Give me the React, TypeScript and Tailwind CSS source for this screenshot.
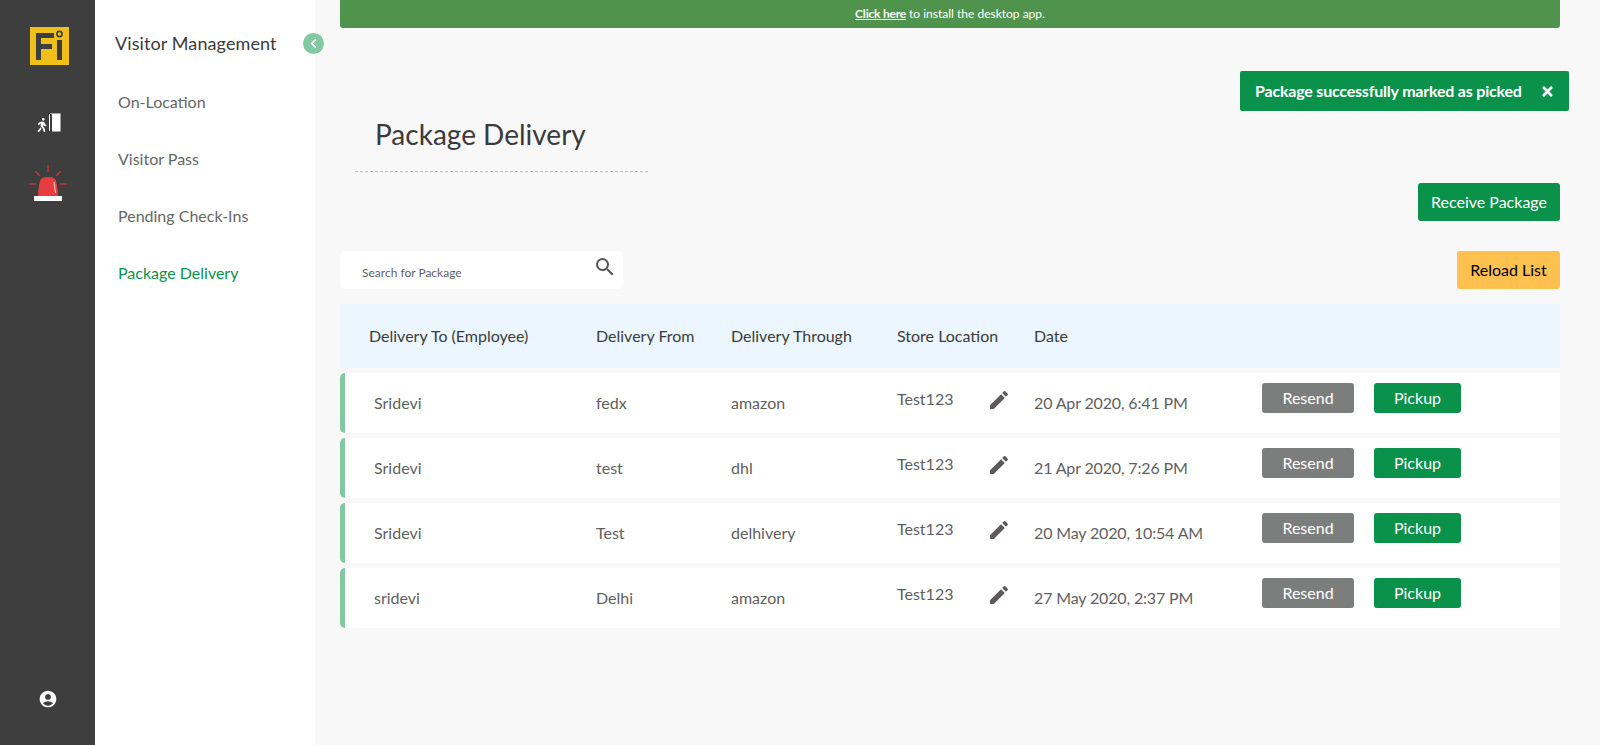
import { FaChevronLeft, FaTimes, FaWalking } from "react-icons/fa";
import { MdAccountCircle, MdEdit, MdSearch } from "react-icons/md";

type Delivery = {
  employee: string;
  from: string;
  through: string;
  location: string;
  date: string;
};

const deliveries: Delivery[] = [
  { employee: "Sridevi", from: "fedx", through: "amazon", location: "Test123", date: "20 Apr 2020, 6:41 PM" },
  { employee: "Sridevi", from: "test", through: "dhl", location: "Test123", date: "21 Apr 2020, 7:26 PM" },
  { employee: "Sridevi", from: "Test", through: "delhivery", location: "Test123", date: "20 May 2020, 10:54 AM" },
  { employee: "sridevi", from: "Delhi", through: "amazon", location: "Test123", date: "27 May 2020, 2:37 PM" },
];

const menuItems = ["On-Location", "Visitor Pass", "Pending Check-Ins", "Package Delivery"];

const Logo = () => (
  <svg width="39" height="38" viewBox="0 0 39 38" className="block">
    <rect width="39" height="38" fill="#f0bf1a" />
    <rect x="6" y="6" width="5" height="27" fill="#3e3e3e" />
    <rect x="6" y="6" width="18" height="5" fill="#3e3e3e" />
    <rect x="6" y="17" width="16" height="5" fill="#3e3e3e" />
    <rect x="27" y="13" width="5" height="20" fill="#3e3e3e" />
    <circle cx="29.5" cy="7" r="2.6" fill="none" stroke="#3e3e3e" strokeWidth="1.6" />
  </svg>
);

const ExitIcon = () => (
  <div className="flex items-end">
    <FaWalking className="text-[14px] text-white" />
    <svg width="12" height="19" viewBox="0 0 12 19" className="block">
      <path d="M0.5 1v17" stroke="#fff" strokeWidth="1" />
      <path d="M0.5 0.5H11.5V18.5H3V1.5z" fill="#fff" />
    </svg>
  </div>
);

const AlarmIcon = () => (
  <svg width="38" height="36" viewBox="0 0 38 36" className="block">
    <g stroke="#c9343a" strokeWidth="1.4">
      <path d="M19 0v7" />
      <path d="M6 6l5 5" />
      <path d="M32 6l-5 5" />
      <path d="M0 19h7" />
      <path d="M31 19h7" />
    </g>
    <path d="M9 31c0-5 1-11 2-15 1-3 3-4 8-4s7 1 8 4c1 4 2 10 2 15z" fill="#e83c40" />
    <path d="M25 17l1.5 11" stroke="#fff" strokeWidth="0.8" />
    <rect x="5" y="31" width="28" height="5" fill="#fff" />
  </svg>
);

const DeliveryRow = ({ employee, from, through, location, date }: Delivery) => (
  <div className="grid h-[60px] grid-cols-[222px_135px_166px_137px_228px_1fr] rounded-l-[5px] border-l-[5px] border-[#82c8a0] bg-white pl-[29px] text-[16px] leading-[20px] text-[#5f5f5f]">
    <div className="pt-[20px]">{employee}</div>
    <div className="pt-[20px]">{from}</div>
    <div className="pt-[20px]">{through}</div>
    <div className="flex items-start justify-between pr-[23px] pt-[16px]">
      <span>{location}</span>
      <MdEdit className="-mt-[1px] text-[24px] text-[#5f5a5a]" />
    </div>
    <div className="pt-[20px] tracking-[-0.15px]">{date}</div>
    <div className="flex items-start gap-[20px] pt-[10px]">
      <button className="h-[30px] w-[92px] rounded-[3px] bg-[#7c7e7d] text-[16px] text-white">Resend</button>
      <button className="h-[30px] w-[87px] rounded-[3px] bg-[#0a924a] text-[16px] text-white">Pickup</button>
    </div>
  </div>
);

export default function App() {
  return (
    <div className="flex h-[745px] w-[1600px] overflow-hidden bg-[#f8f8f8] font-['Lato',sans-serif]">
      <aside className="flex w-[95px] shrink-0 flex-col items-center bg-[#3e3e3e] pb-[36px] pt-[26px]">
        <div className="ml-[3px] mt-[1px]"><Logo /></div>
        <div className="mt-[48px]"><ExitIcon /></div>
        <div className="mt-[33px]"><AlarmIcon /></div>
        <MdAccountCircle className="mt-auto text-[20px] text-white" />
      </aside>

      <nav className="relative w-[220px] shrink-0 bg-white pl-[20px] pt-[31px]">
        <h2 className="text-[18px] leading-[24px] tracking-[0.1px] text-[#3b3b3b]">Visitor Management</h2>
        <button className="absolute right-[-9px] top-[33px] flex h-[21px] w-[21px] items-center justify-center rounded-full bg-[#82c8a0] text-[11px] text-white">
          <FaChevronLeft />
        </button>
        <ul className="mt-[36px] flex flex-col gap-[36px] pl-[3px] text-[16px] leading-[21px] text-[#666666]">
          {menuItems.map((item) => (
            <li key={item} className={item === "Package Delivery" ? "text-[#0a924a]" : ""}>
              {item}
            </li>
          ))}
        </ul>
      </nav>

      <main className="relative flex-1 pl-[25px] pr-[40px]">
        <div className="flex h-[28px] items-center justify-center rounded-b-[3px] bg-[#4f934c] text-[12px] text-white">
          <a className="mr-[3px] font-bold tracking-[-0.2px] underline">Click here</a> to install the desktop app.
        </div>

        <div className="absolute right-[31px] top-[71px] flex h-[40px] w-[329px] items-center justify-between rounded-[2px] bg-[#0a924a] pl-[15px] pr-[14px] text-[16px] font-bold tracking-[-0.2px] text-white">
          <span>Package successfully marked as picked</span>
          <FaTimes className="text-[15px]" />
        </div>

        <div className="ml-[15px] mt-[88px] w-[293px] border-b border-dashed border-[#c4c4c4] pb-[18px] pl-[20px]">
          <h1 className="text-[28px] leading-[37px] text-[#3b3b3b]">Package Delivery</h1>
        </div>

        <div className="mt-[11px] flex justify-end">
          <button className="h-[38px] w-[142px] rounded-[3px] bg-[#0a924a] text-[16px] text-white">Receive Package</button>
        </div>

        <div className="mt-[30px] flex items-center justify-between">
          <div className="flex h-[38px] w-[283px] items-start justify-between rounded-[5px] bg-white pl-[22px] pr-[6px]">
            <span className="mt-[13px] text-[12px] leading-[17px] text-[#5f5f5f]">Search for Package</span>
            <MdSearch className="mt-[4px] text-[24px] text-[#555555]" />
          </div>
          <button className="h-[38px] w-[103px] rounded-[3px] bg-[#fec14f] text-[16px] text-black">Reload List</button>
        </div>

        <div className="mt-[15px] grid h-[64px] grid-cols-[227px_135px_166px_137px_1fr] items-center bg-[#ebf6ff] pl-[29px] text-[16px] text-[#3b3b3b]">
          <div>Delivery To (Employee)</div>
          <div>Delivery From</div>
          <div>Delivery Through</div>
          <div>Store Location</div>
          <div>Date</div>
        </div>

        <div className="mt-[5px] flex flex-col gap-[5px]">
          {deliveries.map((delivery, index) => (
            <DeliveryRow key={index} {...delivery} />
          ))}
        </div>
      </main>
    </div>
  );
}
